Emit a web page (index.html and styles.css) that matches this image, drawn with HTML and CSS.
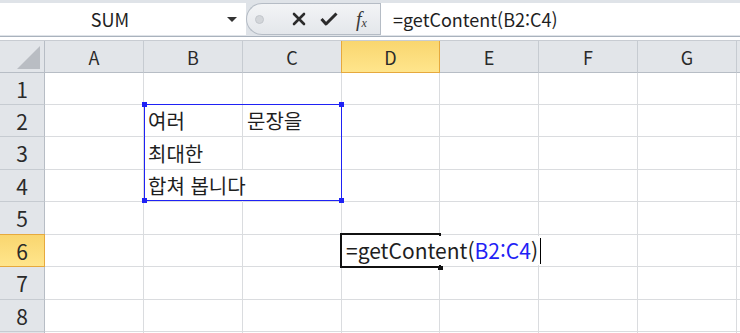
FILE: index.html
```html
<!DOCTYPE html>
<html lang="ko">
<head>
  <meta charset="UTF-8">
  <title>getContent</title>
  <link rel="stylesheet" href="styles.css">
</head>
<body>

  <div class="fbar">
    <div class="namebox">
      <span class="name">SUM</span>
      <span class="drop"></span>
    </div>
    <div class="pill">
      <span class="dot"></span>
      <svg class="ico" width="14" height="14" viewBox="0 0 14 14">
        <path d="M2 2 L12 12 M12 2 L2 12" stroke="#2b2b2b" stroke-width="2.6" stroke-linecap="round"/>
      </svg>
      <svg class="ico" width="18" height="14" viewBox="0 0 18 14">
        <path d="M1.5 7 L6 12 L16.5 1.5" fill="none" stroke="#2b2b2b" stroke-width="3" stroke-linejoin="round"/>
      </svg>
      <span class="fx">f<sub>x</sub></span>
    </div>
    <div class="formula">=getContent(B2:C4)</div>
  </div>

  <div class="sheet">
    <div class="corner"><span class="tri"></span></div>
    <div class="col">A</div>
    <div class="col">B</div>
    <div class="col">C</div>
    <div class="col sel">D</div>
    <div class="col">E</div>
    <div class="col">F</div>
    <div class="col">G</div>
    <div class="col"></div>

    <div class="row">1</div>
    <div class="cell"></div><div class="cell"></div><div class="cell"></div><div class="cell"></div><div class="cell"></div><div class="cell"></div><div class="cell"></div><div class="cell"></div>

    <div class="row">2</div>
    <div class="cell"></div><div class="cell">여러</div><div class="cell">문장을</div><div class="cell"></div><div class="cell"></div><div class="cell"></div><div class="cell"></div><div class="cell"></div>

    <div class="row">3</div>
    <div class="cell"></div><div class="cell">최대한</div><div class="cell"></div><div class="cell"></div><div class="cell"></div><div class="cell"></div><div class="cell"></div><div class="cell"></div>

    <div class="row">4</div>
    <div class="cell"></div><div class="cell spill">합쳐 봅니다</div><div class="cell"></div><div class="cell"></div><div class="cell"></div><div class="cell"></div><div class="cell"></div><div class="cell"></div>

    <div class="row">5</div>
    <div class="cell"></div><div class="cell"></div><div class="cell"></div><div class="cell"></div><div class="cell"></div><div class="cell"></div><div class="cell"></div><div class="cell"></div>

    <div class="row sel">6</div>
    <div class="cell"></div><div class="cell"></div><div class="cell"></div><div class="cell"></div><div class="cell"></div><div class="cell"></div><div class="cell"></div><div class="cell"></div>

    <div class="row">7</div>
    <div class="cell"></div><div class="cell"></div><div class="cell"></div><div class="cell"></div><div class="cell"></div><div class="cell"></div><div class="cell"></div><div class="cell"></div>

    <div class="row">8</div>
    <div class="cell"></div><div class="cell"></div><div class="cell"></div><div class="cell"></div><div class="cell"></div><div class="cell"></div><div class="cell"></div><div class="cell"></div>

    <div class="row"></div>
    <div class="cell"></div><div class="cell"></div><div class="cell"></div><div class="cell"></div><div class="cell"></div><div class="cell"></div><div class="cell"></div><div class="cell"></div>

    <!-- range picked by the formula -->
    <div class="range">
      <span class="h tl"></span><span class="h tr"></span>
      <span class="h bl"></span><span class="h br"></span>
    </div>

    <!-- cell being edited -->
    <div class="active"><span class="fill"></span></div>
    <div class="editor">=getContent(<span class="ref">B2:C4</span>)<span class="caret"></span></div>
  </div>

</body>
</html>
```

FILE: styles.css
```css
body {
  margin: 0;
  width: 740px;
  height: 333px;
  overflow: hidden;
  background: #fff;
  font-family: "Noto Sans CJK KR", "Noto Sans", sans-serif;
  color: #1e1e1e;
}

/* formula bar */

.fbar {
  display: flex;
  height: 37px;
  padding-top: 3px;
  box-sizing: border-box;
  background: #dfe3e8;
  border-bottom: 1px solid #a9b2bd;
}

.namebox {
  width: 246px;
  height: 32px;
  background: #fff;
  display: flex;
  align-items: center;
  position: relative;
}

.name {
  width: 220px;
  text-align: center;
  font-size: 18px;
  line-height: 1;
}

.drop {
  width: 0;
  height: 0;
  border-left: 5px solid transparent;
  border-right: 5px solid transparent;
  border-top: 5px solid #333;
  margin-left: 7px;
}

.pill {
  width: 134px;
  height: 32px;
  box-sizing: border-box;
  display: flex;
  align-items: center;
  gap: 14px;
  padding-left: 8px;
  background: linear-gradient(#f3f4f6, #e4e7eb);
  border: 1px solid #b5bcc5;
  border-right: none;
  border-radius: 16px 0 0 16px;
}

.dot {
  width: 7px;
  height: 7px;
  border-radius: 50%;
  background: #d3d6da;
  border: 1px solid #c3c7cc;
  margin-right: 14px;
}

.ico {
  display: block;
}

.fx {
  font-family: "Liberation Serif", serif;
  font-style: italic;
  font-size: 20px;
  color: #3a3a3a;
  line-height: 1;
  margin-left: 4px;
}

.fx sub {
  font-size: 12px;
  vertical-align: -1px;
}

.formula {
  flex: 1;
  height: 32px;
  background: #fff;
  border-left: 1px solid #b5bcc5;
  padding-left: 12px;
  font-size: 18px;
  line-height: 32px;
}

/* sheet */

.sheet {
  position: relative;
  margin-top: 3px;
  display: grid;
  grid-template-columns: 45px 99px 99px 99px 98px 99px 99px 99px 1fr;
  grid-template-rows: 32px 32px 32px 33px 32px 33px 32px 33px 32px 33px;
  border-top: 1px solid #c8ccd2;
}

.corner,
.col,
.row {
  background: #e2e5e9;
  color: #2a2a2a;
  box-sizing: border-box;
  display: flex;
  align-items: center;
  justify-content: center;
}

.corner {
  border-right: 1px solid #b7bdc5;
  border-bottom: 1px solid #b7bdc5;
  position: relative;
}

.tri {
  position: absolute;
  right: 4px;
  bottom: 3px;
  width: 0;
  height: 0;
  border-left: 23px solid transparent;
  border-bottom: 23px solid #b9bdc3;
}

.col {
  font-size: 18px;
  border-right: 1px solid #c6cbd1;
  border-bottom: 1px solid #b7bdc5;
}

.row {
  font-size: 21px;
  border-right: 1px solid #b7bdc5;
  border-bottom: 1px solid #c6cbd1;
}

.col.sel,
.row.sel {
  background: linear-gradient(#f9d66f, #ffe58c);
  border-color: #e6a93d;
}

.col.sel {
  border-left: 1px solid #e6a93d;
  margin-left: -1px;
}

.row.sel {
  border-top: 1px solid #e6a93d;
  margin-top: -1px;
}

.cell {
  box-sizing: border-box;
  border-right: 1px solid #dadcdf;
  border-bottom: 1px solid #dadcdf;
  font-size: 20px;
  line-height: 1;
  padding: 0 0 5px 4px;
  display: flex;
  align-items: flex-end;
  white-space: nowrap;
}

.cell.spill {
  border-right-color: transparent;
}

.range {
  position: absolute;
  left: 144px;
  top: 63px;
  width: 198px;
  height: 97px;
  box-sizing: border-box;
  border: 1px solid #1f22f5;
}

.h {
  position: absolute;
  width: 5px;
  height: 5px;
  background: #1f22f5;
}

.tl { left: -3px; top: -3px; }
.tr { right: -3px; top: -3px; }
.bl { left: -3px; bottom: -3px; }
.br { right: -3px; bottom: -3px; }

.active {
  position: absolute;
  left: 340px;
  top: 192px;
  width: 101px;
  height: 35px;
  box-sizing: border-box;
  border: 2px solid #111;
}

.fill {
  position: absolute;
  right: -4px;
  bottom: -4px;
  width: 5px;
  height: 4px;
  background: #111;
}

.editor {
  position: absolute;
  left: 342px;
  top: 195px;
  height: 29px;
  padding: 0 4px 0 4px;
  background: #fff;
  font-size: 21px;
  line-height: 29px;
  white-space: nowrap;
  display: flex;
  align-items: center;
}

.ref {
  color: #1f22f5;
}

.caret {
  width: 1px;
  height: 26px;
  background: #000;
  margin-left: 2px;
}
```
